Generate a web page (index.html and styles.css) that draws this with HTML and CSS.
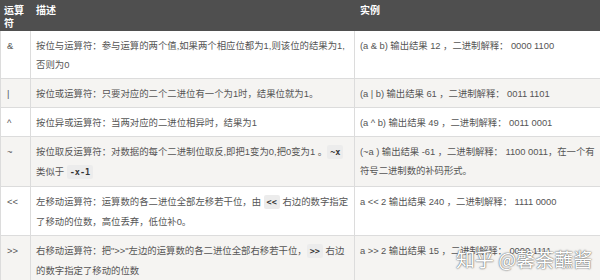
FILE: index.html
```html
<!DOCTYPE html>
<html lang="zh-CN">
<head>
<meta charset="utf-8">
<title>运算符</title>
<link rel="stylesheet" href="styles.css">
</head>
<body>
<div class="wrap">
<table class="ops">
  <colgroup>
    <col class="c1"><col class="c2"><col class="c3">
  </colgroup>
  <thead>
    <tr><th>运算符</th><th>描述</th><th>实例</th></tr>
  </thead>
  <tbody>
    <tr>
      <td>&amp;</td>
      <td>按位与运算符：参与运算的两个值,如果两个相应位都为1,则该位的结果为1,否则为0</td>
      <td>(a &amp; b) 输出结果 12 ，二进制解释： 0000 1100</td>
    </tr>
    <tr class="alt">
      <td>|</td>
      <td>按位或运算符：只要对应的二个二进位有一个为1时，结果位就为1。</td>
      <td>(a | b) 输出结果 61 ，二进制解释： 0011 1101</td>
    </tr>
    <tr>
      <td>^</td>
      <td>按位异或运算符：当两对应的二进位相异时，结果为1</td>
      <td>(a ^ b) 输出结果 49 ，二进制解释： 0011 0001</td>
    </tr>
    <tr class="alt">
      <td>~</td>
      <td>按位取反运算符：对数据的每个二进制位取反,即把1变为0,把0变为1 。<code>~x</code> 类似于 <code>-x-1</code></td>
      <td>(~a ) 输出结果 -61 ，二进制解释： 1100 0011，在一个有符号二进制数的补码形式。</td>
    </tr>
    <tr>
      <td>&lt;&lt;</td>
      <td>左移动运算符：运算数的各二进位全部左移若干位，由 <code>&lt;&lt;</code> 右边的数字指定了移动的位数，高位丢弃，低位补0。</td>
      <td>a &lt;&lt; 2 输出结果 240 ，二进制解释： 1111 0000</td>
    </tr>
    <tr class="alt">
      <td>&gt;&gt;</td>
      <td>右移动运算符：把"&gt;&gt;"左边的运算数的各二进位全部右移若干位，<code>&gt;&gt;</code> 右边的数字指定了移动的位数</td>
      <td>a &gt;&gt; 2 输出结果 15 ，二进制解释： 0000 1111</td>
    </tr>
  </tbody>
</table>
<div class="watermark">知乎 @馨荼蘸酱</div>
</div>
</body>
</html>
```
FILE: styles.css
```css
html, body {
  margin: 0;
  padding: 0;
  background: #ffffff;
}
.wrap {
  position: relative;
  width: 600px;
  height: 280px;
  overflow: hidden;
}
.ops {
  width: 600px;
  table-layout: fixed;
  border-collapse: collapse;
  font-family: "Liberation Sans", "Noto Sans CJK SC", sans-serif;
  font-size: 9.4px;
  color: #555;
}
.c1 { width: 30px; }
.c2 { width: 324px; }
.c3 { width: 246px; }
.ops th {
  background: #4f4f4f;
  color: #fff;
  font-weight: bold;
  text-align: left;
  vertical-align: top;
  font-size: 10px;
  line-height: 13px;
  padding: 3px 5px 0 5px;
  border: 1px solid #4f4f4f;
}
.ops th:first-child {
  padding-left: 3px;
  padding-right: 0;
}
.ops td {
  vertical-align: top;
  line-height: 19px;
  padding: 5px 5px 4px 5px;
  border: 1px solid #dcdcdc;
}
.ops td:first-child {
  padding-left: 6px;
}
.ops td:last-child {
  padding-right: 0;
  letter-spacing: -0.05px;
}
.ops tr.alt td {
  background: #f5f4f2;
}
.ops code {
  font-family: "DejaVu Sans Mono", monospace;
  font-weight: bold;
  font-size: 8.5px;
  background: #ececec;
  color: #333;
  padding: 2px 3px;
  border-radius: 2px;
}
.watermark {
  position: absolute;
  left: 456px;
  top: 245px;
  font-family: "Noto Sans CJK SC", sans-serif;
  font-size: 19px;
  color: #fff;
  text-shadow: 0 0 1px #555, 0 0 2px #777;
  white-space: nowrap;
}
```
